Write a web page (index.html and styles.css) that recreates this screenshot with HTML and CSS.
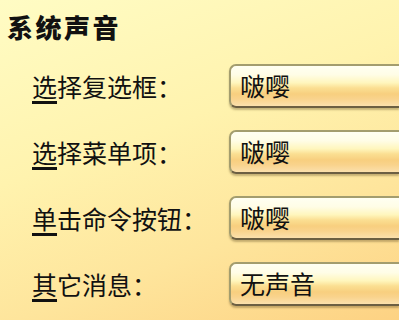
FILE: index.html
```html
<!DOCTYPE html>
<html lang="zh-CN">
<head>
<meta charset="utf-8">
<link rel="stylesheet" href="styles.css">
</head>
<body>
<div class="page">
  <h1 class="title">系统声音</h1>
  <div class="rows">
    <div class="label"><span class="key">选</span>择复选框：</div>
    <div class="box">啵嘤</div>
    <div class="label"><span class="key">选</span>择菜单项：</div>
    <div class="box">啵嘤</div>
    <div class="label"><span class="key">单</span>击命令按钮：</div>
    <div class="box">啵嘤</div>
    <div class="label"><span class="key">其</span>它消息：</div>
    <div class="box">无声音</div>
  </div>
</div>
</body>
</html>
```
FILE: styles.css
```css
html, body {
  margin: 0;
  padding: 0;
  width: 399px;
  height: 320px;
  overflow: hidden;
}
body {
  background: linear-gradient(160deg, #fffcc4 0%, #fff3ae 40%, #fee59c 70%, #fdd283 100%);
  font-family: "Noto Sans CJK SC", "Noto Sans", sans-serif;
  color: #111;
}
.page {
  padding: 0 0 0 7px;
}
.title {
  margin: 0;
  padding-top: 12px;
  font-size: 26px;
  line-height: 30px;
  font-weight: 900;
  letter-spacing: 2.5px;
}
.rows {
  display: grid;
  grid-template-columns: 197px 1fr;
  row-gap: 22px;
  margin-top: 22px;
  padding-left: 25px;
  align-items: center;
}
.label {
  font-size: 25px;
  line-height: 30px;
  white-space: nowrap;
}
.key {
  text-decoration: underline;
  text-decoration-thickness: 3px;
  text-underline-offset: 4px;
}
.box {
  box-sizing: border-box;
  height: 44px;
  border: 2px solid #a39d6e;
  border-bottom-color: #6c5f42;
  border-right: none;
  border-radius: 7px 0 0 7px;
  padding-left: 9px;
  font-size: 25px;
  line-height: 38px;
  background: linear-gradient(180deg, #fffff2 0%, #fffde6 22%, #fff6bd 42%, #fbdf92 55%, #f8cf7f 70%, #f9d38c 82%, #fbe0ac 100%);
  box-shadow: 0 2px 2px rgba(90, 70, 30, 0.35);
}
```
